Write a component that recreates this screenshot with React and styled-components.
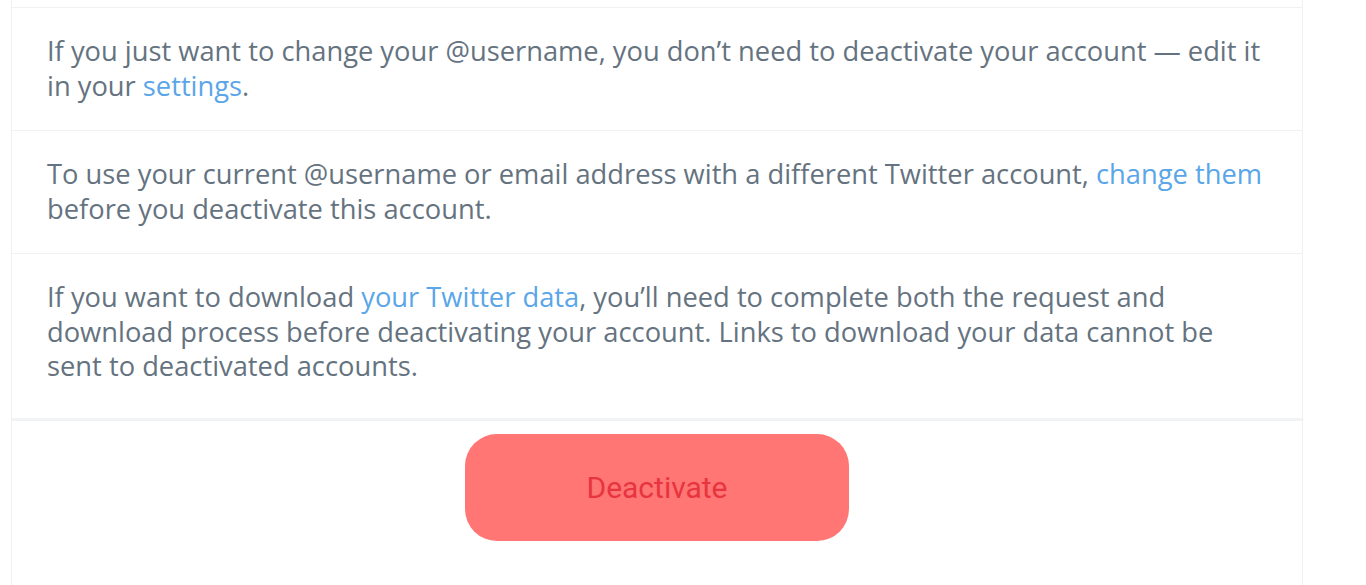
import React from 'react'
import styled, { createGlobalStyle } from 'styled-components'

const GlobalStyle = createGlobalStyle`
  html, body {
    margin: 0;
    padding: 0;
    background: #ffffff;
  }
  body {
    font-family: "Open Sans", "Noto Sans", sans-serif;
  }
`

const Page = styled.div`
  display: flex;
  height: 585px;
  overflow: hidden;
  padding-left: 11px;
  background: #ffffff;
`

const Column = styled.div`
  width: 1290px;
  display: flex;
  flex-direction: column;
  border-left: 1px solid #eef0f2;
  border-right: 1px solid #eef0f2;
`

const TopStub = styled.div`
  height: 7px;
  border-bottom: 1px solid #eff1f3;
`

const Notice = styled.div`
  padding: 26px 30px ${p => p.$bottom || 27}px 35px;
  border-bottom: ${p => p.$thick ? 3 : 1}px solid ${p => p.$thick ? '#f2f3f4' : '#eff1f3'};
  color: #657380;
  font-size: 27.3px;
  line-height: 34.5px;
`

const Link = styled.a`
  color: #5aa6e8;
  text-decoration: none;
`

const ButtonRow = styled.div`
  display: flex;
  justify-content: center;
  padding-top: 13px;
`

const DangerButton = styled.button`
  width: 384px;
  height: 107px;
  border: none;
  border-radius: 32px;
  background: #ff7675;
  color: #e8343f;
  font-family: Roboto, "Liberation Sans", sans-serif;
  font-size: 30px;
  cursor: pointer;
`

export default function App() {
  return (
    <>
      <GlobalStyle />
      <Page>
        <Column>
          <TopStub />
          <Notice>
            If you just want to change your @username, you don’t need to deactivate your account — edit it
            in your <Link>settings</Link>.
          </Notice>
          <Notice>
            To use your current @username or email address with a different Twitter account, <Link>change them</Link>{' '}
            before you deactivate this account.
          </Notice>
          <Notice $bottom={34} $thick>
            If you want to download <Link>your Twitter data</Link>, you’ll need to complete both the request and
            download process before deactivating your account. Links to download your data cannot be
            sent to deactivated accounts.
          </Notice>
          <ButtonRow>
            <DangerButton>Deactivate</DangerButton>
          </ButtonRow>
        </Column>
      </Page>
    </>
  )
}
